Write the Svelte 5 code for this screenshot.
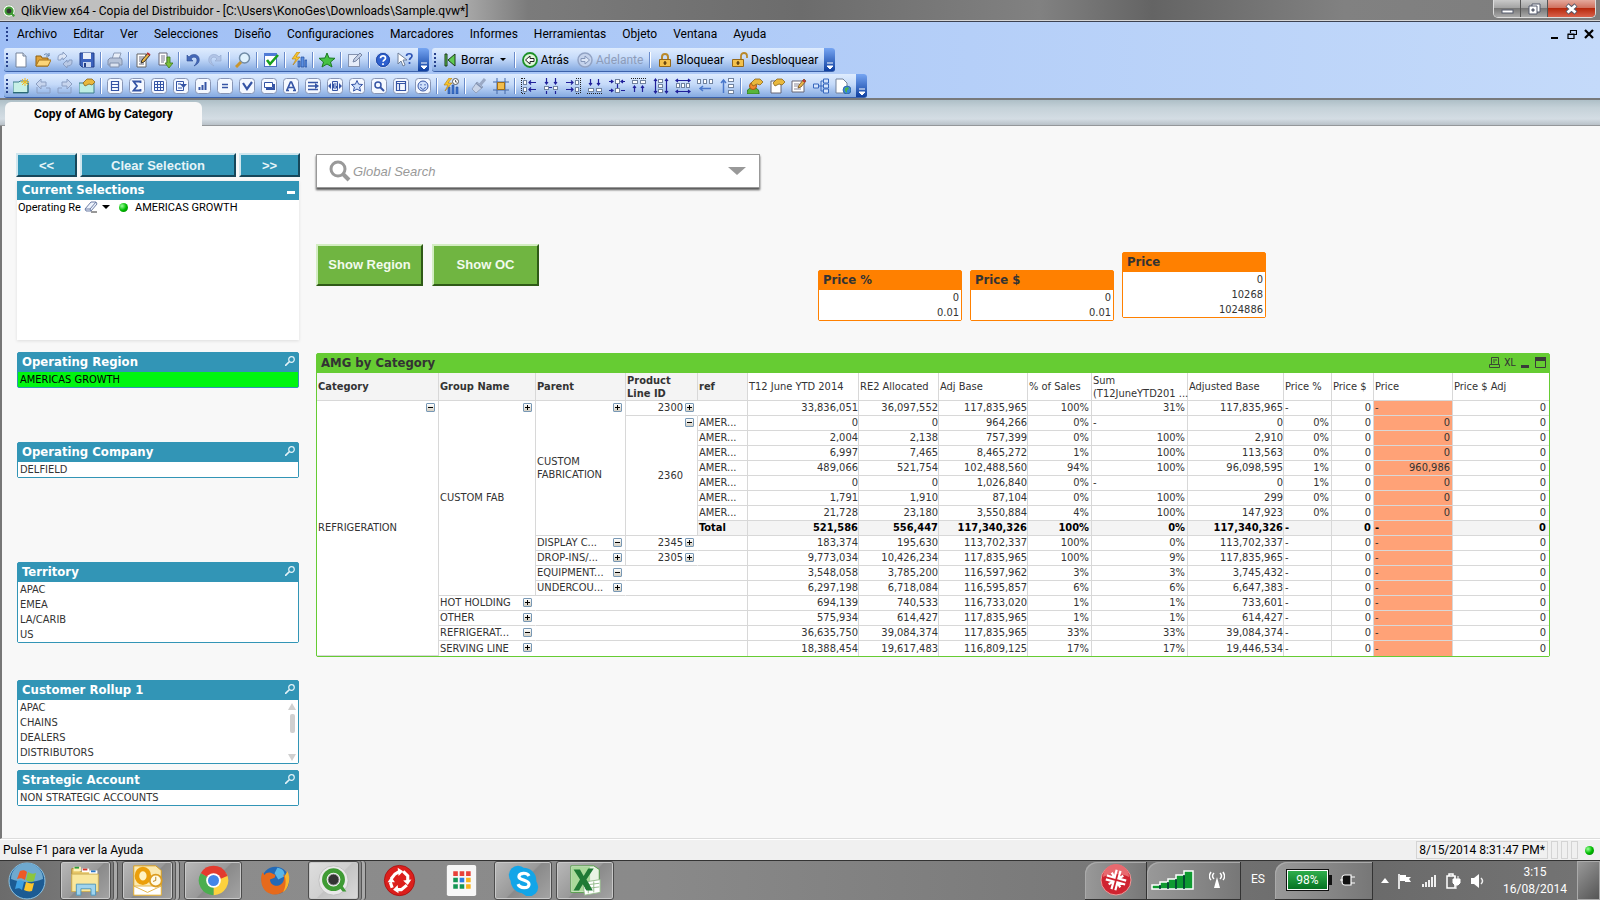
<script>
    // Menu
    const menus = ["Archivo", "Editar", "Ver", "Selecciones", "Diseño", "Configuraciones", "Marcadores", "Informes", "Herramientas", "Objeto", "Ventana", "Ayuda"];

    // Toolbars, "|" is a separator
    const standard = ["new", "open", "reload", "save", "|", "print", "|", "edit", "script", "|", "undo", "redo", "|", "find", "|", "check", "|", "wizard", "|", "star", "|", "note", "|", "help", "what"];
    const design = ["sheet", "prev", "next", "props", "|", "list", "stats", "grid", "multi", "chart", "input", "current", "button", "text", "line", "slider", "bookmark", "search", "container", "custom", "|", "chartwiz", "|", "brush", "crop", "|", "aleft", "acenter", "aright", "abottom", "amiddle", "atop", "vspace", "hspace", "hadjust", "vadjust", "|", "user", "docprops", "expr", "tables", "web"];

    // Icon parts
    const frame = '<rect x=".5" y=".5" width="15" height="15" rx="3" fill="#f4f8ff" stroke="#8795b5"/>';
    const page = '<path d="M3 1h7l3 3v11H3z" fill="#fff" stroke="#75839b"/><path d="M10 1v3h3" fill="#dbe3ef" stroke="#75839b"/>';
    const pen = '<path d="M7 10l1-3 5-6 2 2-5 6z" fill="#e8b548" stroke="#6d4a1e" stroke-width=".8"/><path d="M12 2l2 2" stroke="#b33" stroke-width="2"/>';
    const hand = '<path d="M4 5l4-4h5l3 3-3 3-3-1-4 2z" fill="#e9b83c" stroke="#8a641a" stroke-width=".8"/>';
    const bolt = '<path d="M6 0L1 7h4L2 13l7-8H5l4-5z" fill="#f7c52d" stroke="#b17c12" stroke-width=".6"/>';
    const box = (x, y, w, h) => `<rect x="${x}.5" y="${y}.5" width="${w}" height="${h}" fill="#fff" stroke="#71839f"/>`;
    const navy = (d) => `<path d="${d}" fill="none" stroke="#20209a" stroke-width="1.2"/>`;
    const dots = (d) => `<path d="${d}" fill="none" stroke="#222" stroke-width="1" stroke-dasharray="1 1"/>`;

    const icons = {
        new: page,
        open: '<path d="M1 14V4h5l1 2h6v8z" fill="#e0a33a" stroke="#8f6112"/><path d="M1 14l3-6h12l-3 6z" fill="#fcd579" stroke="#a8741a"/><path d="M9 3c2-2 4-1 5 1m0-3v3h-3" fill="none" stroke="#5f7fa6"/>',
        reload: '<path d="M1 8V6c0-3 2-4 5-4V0l4 4-4 4V6C5 6 4 6 4 8z" fill="#dbe5f6" stroke="#8499bd" stroke-width=".9"/><path d="M15 8v2c0 3-2 4-5 4v2l-4-4 4-4v2c1 0 2 0 2-2z" fill="#b9c9e5" stroke="#8499bd" stroke-width=".9"/>',
        save: '<path d="M1 1h14v14H3l-2-2z" fill="#3c62bd" stroke="#233f88"/><path d="M4 1h8v6H4z" fill="#e9effa"/><path d="M4 10h8v5H4z" fill="#c7d4ee"/><path d="M5 11h2v4H5z" fill="#233f88"/>',
        print: '<path d="M5 7l2-6h7l-2 6z" fill="#e8eef8" stroke="#8d9cb7"/><path d="M1 8l2-2h11l1 2v5H1z" fill="#b6c3d9" stroke="#8190ac"/><path d="M3 11h9v4H3z" fill="#dbe3f0" stroke="#8190ac"/>',
        edit: '<path d="M2 2h9v13H2z" fill="#fff" stroke="#666"/><path d="M4 5h5M4 7h4M4 9h3M4 12h5" stroke="#667"/><path d="M6 11l1-3 6-7 2 2-6 7z" fill="#e8b548" stroke="#222" stroke-width=".9"/><path d="M12 1l3 2" stroke="#b33" stroke-width="2"/>',
        script: '<path d="M2 1h8v12H2z" fill="#fff" stroke="#667"/><path d="M4 4h4M4 6h4M4 8h4M4 10h3" stroke="#778"/><path d="M10 5h3v6h3l-4 5-4-5h2z" fill="#7cbf3b" stroke="#3b7a17" stroke-width=".8"/>',
        undo: '<path d="M2 3v6h6L6 7c2-3 6-2 6 1 0 2-1 4-3 6 4-2 6-4 5-8-1-4-7-5-10-1z" fill="#4468b8" stroke="#2c4c92" stroke-width=".6"/>',
        redo: '<path d="M14 3v6H8l2-2C8 4 4 5 4 8c0 2 1 4 3 6C3 12 1 10 2 6c1-4 7-5 10-1z" fill="#b1c4e6" stroke="#92a8ce" stroke-width=".6"/>',
        find: '<circle cx="9.500" cy="6" r="5" fill="#dff1fd" stroke="#6f8aa5" stroke-width="1.500"/><path d="M6 10l-5 5" stroke="#c9952f" stroke-width="3"/>',
        check: '<rect x="1.500" y="1.500" width="12" height="13" fill="#fff" stroke="#4a6fc1"/><path d="M1 1h13v3H1z" fill="#4f7bd6"/><path d="M4 8l3 4 8-9" fill="none" stroke="#18a01d" stroke-width="2.600"/>',
        wizard: '<path d="M7 9h2v6H7zM10 5h3v10h-3zM14 8h2v7h-2z" fill="#5b8fe0" stroke="#244f9d" stroke-width=".7"/>' + bolt,
        star: '<path d="M8 1l2 5 6 .3-4.500 3.700L13 15l-5-3-5 3 1.500-5L0 6.300 6 6z" fill="#46c244" stroke="#1d7a23"/>',
        note: '<rect x="1.500" y="2.500" width="11" height="12" fill="#e6edf9" stroke="#8492ae"/><path d="M6 10l1-3 6-6 2 2-6 6z" fill="#c3cee3" stroke="#7787a6"/>',
        help: '<circle cx="8" cy="8" r="7.500" fill="#2e60cf" stroke="#c9d7f2"/><circle cx="8" cy="8" r="6.500" fill="none" stroke="#204aa5"/><path d="M5.500 6.200c.2-3 5-3 5 0 0 1.800-2.400 1.800-2.400 3.600M8 11.300v1.800" fill="none" stroke="#fff" stroke-width="1.700"/>',
        what: '<path d="M1 1v11l3-3 2 5 2-1-2-5h4z" fill="#fff" stroke="#6e7f99"/><path d="M9.500 4c0-3 5.500-3 5.500 0 0 2-2.500 2-2.500 4M12.500 10v2" fill="none" stroke="#2f55b5" stroke-width="1.700"/>',
        sheet: '<path d="M0 4h6l1-1h8v12H0z" fill="#c7f0e6" stroke="#3d7d8b"/><path d="M0 14.500h15V5" fill="none" stroke="#2b6877"/><path d="M12 0v8M8 4h8M9 1l6 6M15 1L9 7" stroke="#f0bb22"/>',
        prev: '<path d="M2 9v6h13v-5h-4" fill="none" stroke="#8b9ec2"/><path d="M1 6l5-5v3h5v4H6v3z" fill="#c7d5ee" stroke="#8b9ec2"/>',
        next: '<path d="M14 9v6H1v-5h4" fill="none" stroke="#8b9ec2"/><path d="M15 6l-5-5v3H5v4h5v3z" fill="#c7d5ee" stroke="#8b9ec2"/>',
        props: '<path d="M0 5h15v10H0z" fill="#bdeee2" stroke="#3d7d8b"/>' + hand,
        list: frame + '<path d="M4.500 3.500h7v9h-7zM5 6.500h6M5 9.500h6" fill="none" stroke="#3554a5" stroke-width="1.200"/>',
        stats: frame + '<path d="M11.500 5V3.500h-7L8 8l-3.500 4.500h7V11" fill="none" stroke="#3554a5" stroke-width="1.800"/>',
        grid: frame + '<path d="M3.500 3.500h9v9h-9zM6.500 3v9M9.500 3v9M3 6.500h9M3 9.500h9" fill="none" stroke="#3554a5"/>',
        multi: frame + '<path d="M3.500 3.500h7v9h-7zM5 6h3M5 10h4" fill="none" stroke="#3554a5"/><path d="M7 6h7l-3.500 4z" fill="#3554a5"/>',
        chart: frame + '<path d="M4.500 12v-3M7.500 12V7M10.500 12V4" stroke="#3554a5" stroke-width="2"/>',
        input: frame + '<path d="M5 6.500h6M5 9.500h6" stroke="#3554a5" stroke-width="1.600"/>',
        current: frame + '<path d="M4 5l4 6 5-7" fill="none" stroke="#3554a5" stroke-width="2.200"/>',
        button: frame + '<path d="M3.500 4.500h8v5h-8z" fill="#fff" stroke="#3554a5"/><path d="M5 11h8V6" fill="none" stroke="#3554a5" stroke-width="2"/>',
        text: frame + '<path d="M4 12L7.500 4h1L12 12M5.500 9.500h5M3 12.500h3M10 12.500h3" fill="none" stroke="#3554a5" stroke-width="1.700"/>',
        line: frame + '<path d="M3 4.500h10M3 8h8M3 11.500h10" stroke="#3554a5" stroke-width="1.400"/><path d="M10 5l4 3-4 3z" fill="#3554a5"/>',
        slider: frame + '<path d="M5.500 3.500h5v9h-5z" fill="#dfe8fb" stroke="#3554a5"/><path d="M4 5v6L1 8zM12 5v6l3-3z" fill="#3554a5"/><path d="M9.500 6h-3v4h3V8h-3" fill="none" stroke="#3554a5"/>',
        bookmark: frame + '<path d="M8 2.500l1.600 3.700 4 .3-3 2.600.9 4L8 11l-3.500 2.100.9-4-3-2.600 4-.3z" fill="#cfe0fb" stroke="#3554a5"/>',
        search: frame + '<circle cx="7" cy="7" r="3" fill="none" stroke="#3554a5" stroke-width="1.500"/><path d="M9 9l4 4" stroke="#3554a5" stroke-width="2"/>',
        container: frame + '<path d="M3.500 3.500h9v9h-9zM3 5.500h9M6.500 5v8" fill="none" stroke="#3554a5" stroke-width="1.200"/>',
        custom: frame + '<circle cx="8" cy="8" r="5" fill="#cfe0fb" stroke="#3554a5"/><path d="M5.500 9c1 3 4 3 5 0M6 6v1.500M10 6v1.500" fill="none" stroke="#3554a5"/>',
        chartwiz: '<path d="M5 9h2v7H5zM9 7h2v9H9zM13 9h2v7h-2z" fill="#3c74cf" stroke="#244f9d" stroke-width=".6"/>' + bolt + '<circle cx="12.500" cy="3.500" r="3" fill="#fff" stroke="#555"/><path d="M12.500 2v2H14" fill="none" stroke="#444" stroke-width=".8"/>',
        brush: '<path d="M14 1l-5 6" stroke="#9aa9c5" stroke-width="3"/><path d="M6 4l6 5-7 6-4-4z" fill="#c9d4e8" stroke="#93a2be"/><path d="M5 5l6 5" stroke="#8192b2" stroke-width="1.500"/>',
        crop: '<path d="M4 0v16M12 0v16M0 4h16M0 12h16" stroke="#4468a8"/><path d="M4.500 4.500h7v7h-7z" fill="#f2bd4d" stroke="#a06d18"/>',
        aleft: dots("M.5 0v16M1 .5h4M1 15.500h4") + box(2, 2, 3, 4) + box(2, 9, 3, 4) + navy("M15 4.500H8M10 2.500l-2 2 2 2M15 11.500H8M10 9.500l-2 2 2 2"),
        acenter: box(1, 8, 4, 3) + box(10, 8, 4, 3) + navy("M3.500 0v6M2 4l1.500 2L5 4M3.500 16v-3M12.500 0v6M11 4l1.500 2L14 4M12.500 16v-3M6 9.500h3"),
        aright: dots("M15.500 0v16M11 .5h4M11 15.500h4") + box(10, 2, 3, 4) + box(10, 9, 3, 4) + navy("M1 4.500h7M6 2.500l2 2-2 2M1 11.500h7M6 9.500l2 2-2 2"),
        abottom: dots("M0 15.500h16") + box(1, 10, 5, 3) + box(9, 10, 5, 3) + navy("M3.500 1v6M2 5l1.500 2L5 5M11.500 1v6M10 5l1.500 2L13 5"),
        amiddle: box(6, 1, 4, 4) + box(6, 10, 4, 4) + navy("M0 3.500h4M2 2l2 1.500L2 5M16 3.500h-4M14 2l-2 1.500L14 5M0 12.500h4M2 11l2 1.500L2 14M16 12.500h-4M8.500 6v4"),
        atop: dots("M0 .5h16") + box(1, 2, 5, 3) + box(9, 2, 5, 3) + navy("M3.500 14V8M2 10l1.500-2L5 10M11.500 14V8M10 10l1.500-2 1.500 2"),
        vspace: box(5, 1, 4, 3) + box(5, 6, 4, 3) + box(5, 11, 4, 3) + navy("M2.500 1v14M1 3l1.500-2L4 3M1 13l1.500 2L4 13M13.500 1v14M12 3l1.500-2L15 3M12 13l1.500 2 1.500-2"),
        hspace: box(1, 5, 3, 4) + box(6, 5, 3, 4) + box(11, 5, 3, 4) + navy("M1 2.500h14M3 1L1 2.500 3 4M13 1l2 1.500L13 4M1 13.500h14M3 12l-2 1.500L3 15M13 12l2 1.500-2 1.500"),
        hadjust: box(0, 1, 3, 4) + box(6, 1, 3, 4) + box(12, 1, 3, 4) + '<path d="M14 10.500H3M6 8l-3 2.500L6 13" fill="none" stroke="#4a78cc" stroke-width="1.500"/>',
        vadjust: box(9, 0, 5, 3) + box(9, 6, 5, 3) + box(9, 12, 5, 3) + '<path d="M4.500 15V2M2 5l2.500-3L7 5" fill="none" stroke="#4a78cc" stroke-width="1.500"/>',
        user: '<path d="M0 16c0-5 2-6 6-6s6 1 6 6z" fill="#58b53c" stroke="#2f7d1c"/><circle cx="6" cy="8" r="3.500" fill="#f08a2c" stroke="#a85212"/>' + hand,
        docprops: '<path d="M2 3h10v12H2z" fill="#fff" stroke="#667"/>' + hand,
        expr: '<path d="M1 3h12v11H1z" fill="#fff" stroke="#667"/><path d="M3 6h5M3 8h4M3 11h7" stroke="#889"/>' + pen,
        tables: '<path d="M5 8h3M8 3v10M8 3h3M8 13h3M8 8h3" stroke="#3667bd" fill="none"/><path d="M.5 6h5v4h-5zM10.500 1h5v4h-5zM10.500 6h5v4h-5zM10.500 11h5v4h-5z" fill="#d5e4fb" stroke="#3667bd"/>',
        web: '<path d="M1 1h7l4 4v10H1z" fill="#fff" stroke="#75839b"/><circle cx="12" cy="12" r="4" fill="#3a86d8" stroke="#225a9c" stroke-width=".7"/><path d="M10 10l3-1 1 2-2 1v3l-2-2z" fill="#4db34d"/>',
        erase: '<path d="M3 2h2v12H3zM13 2v12L6 8z" fill="#5fca50" stroke="#1c3b1a"/>',
        back: '<circle cx="8" cy="8" r="7" fill="#dff7da" stroke="#1d9128" stroke-width="1.800"/><path d="M3.500 8L8 4v2.500h4v3H8V12z" fill="#fff" stroke="#222"/>',
        forward: '<circle cx="8" cy="8" r="7" fill="#c5d3ec" stroke="#92a3c4" stroke-width="1.500"/><path d="M12.500 8L8 4v2.500H4v3h4V12z" fill="#dbe5f6" stroke="#8496b8"/>',
        lock: '<path d="M5 8V5c0-4 6-4 6 0v3" fill="none" stroke="#b9892b" stroke-width="2"/><path d="M2.500 7.500h11v7h-11z" fill="#f4c14c" stroke="#95681a"/><path d="M8 9v4M6.500 11h3" stroke="#5d3d0d" stroke-width="1.400"/>',
        unlock: '<path d="M9 8V4c0-4 6-4 6 0v2" fill="none" stroke="#b9892b" stroke-width="1.800"/><path d="M.5 7.500h11v7H.5z" fill="#f4c14c" stroke="#95681a"/><path d="M6 9v4M4.500 11h3" stroke="#5d3d0d" stroke-width="1.400"/>',
    };

    // List boxes
    const lists = [
        { title: "Operating Region", cls: "region", items: ["AMERICAS GROWTH"] },
        { title: "Operating Company", cls: "company", items: ["DELFIELD"] },
        { title: "Territory", cls: "territory", items: ["APAC", "EMEA", "LA/CARIB", "US"] },
        { title: "Customer Rollup 1", cls: "rollup", items: ["APAC", "CHAINS", "DEALERS", "DISTRIBUTORS"] },
        { title: "Strategic Account", cls: "account", items: ["NON STRATEGIC ACCOUNTS"] },
    ];

    const prices = [
        { title: "Price %", items: ["0", "0.01"] },
        { title: "Price $", items: ["0", "0.01"] },
        { title: "Price", items: ["0", "10268", "1024886"] },
    ];

    // Pivot table
    const widths = [122, 97, 90, 72, 50, 111, 80, 89, 64, 96, 96, 48, 42, 79, 96];
    const dims = ["Category", "Group Name", "Parent", "Product Line ID", "ref"];
    const measures = ["T12 June YTD 2014", "RE2 Allocated", "Adj Base", "% of Sales", "Sum (T12JuneYTD201\u00a0...", "Adjusted Base", "Price %", "Price $", "Price", "Price $ Adj"];
    const amer = { text: "AMER..." };

    const rows = [
        {
            lead: [
                { text: "REFRIGERATION", rows: 17, sign: "-" },
                { text: "CUSTOM FAB", rows: 13, sign: "+" },
                { text: "CUSTOM FABRICATION", rows: 9, sign: "+", wrap: true },
                { text: "2300", num: true, sign: "+", open: true },
                { text: "" },
            ],
            values: ["33,836,051", "36,097,552", "117,835,965", "100%", "31%", "117,835,965", "-", "0", "-", "0"],
        },
        { lead: [{ text: "2360", rows: 8, num: true, sign: "-" }, amer], values: ["0", "0", "964,266", "0%", "-", "0", "0%", "0", "0", "0"] },
        { lead: [amer], values: ["2,004", "2,138", "757,399", "0%", "100%", "2,910", "0%", "0", "0", "0"] },
        { lead: [amer], values: ["6,997", "7,465", "8,465,272", "1%", "100%", "113,563", "0%", "0", "0", "0"] },
        { lead: [amer], values: ["489,066", "521,754", "102,488,560", "94%", "100%", "96,098,595", "1%", "0", "960,986", "0"] },
        { lead: [amer], values: ["0", "0", "1,026,840", "0%", "-", "0", "1%", "0", "0", "0"] },
        { lead: [amer], values: ["1,791", "1,910", "87,104", "0%", "100%", "299", "0%", "0", "0", "0"] },
        { lead: [amer], values: ["21,728", "23,180", "3,550,884", "4%", "100%", "147,923", "0%", "0", "0", "0"] },
        { total: true, lead: [{ text: "Total" }], values: ["521,586", "556,447", "117,340,326", "100%", "0%", "117,340,326", "-", "0", "-", "0"] },
        { lead: [{ text: "DISPLAY C...", sign: "-" }, { text: "2345", num: true, sign: "+", open: true }, { text: "" }], values: ["183,374", "195,630", "113,702,337", "100%", "0%", "113,702,337", "-", "0", "-", "0"] },
        { lead: [{ text: "DROP-INS/...", sign: "+" }, { text: "2305", num: true, sign: "+", open: true }, { text: "" }], values: ["9,773,034", "10,426,234", "117,835,965", "100%", "9%", "117,835,965", "-", "0", "-", "0"] },
        { lead: [{ text: "EQUIPMENT...", sign: "-", open: true }, { text: "", cols: 2 }], values: ["3,548,058", "3,785,200", "116,597,962", "3%", "3%", "3,745,432", "-", "0", "-", "0"] },
        { lead: [{ text: "UNDERCOU...", sign: "+", open: true }, { text: "", cols: 2 }], values: ["6,297,198", "6,718,084", "116,595,857", "6%", "6%", "6,647,383", "-", "0", "-", "0"] },
        { lead: [{ text: "HOT HOLDING", sign: "+", open: true }, { text: "", cols: 3 }], values: ["694,139", "740,533", "116,733,020", "1%", "1%", "733,601", "-", "0", "-", "0"] },
        { lead: [{ text: "OTHER", sign: "+", open: true }, { text: "", cols: 3 }], values: ["575,934", "614,427", "117,835,965", "1%", "1%", "614,427", "-", "0", "-", "0"] },
        { lead: [{ text: "REFRIGERAT...", sign: "-", open: true }, { text: "", cols: 3 }], values: ["36,635,750", "39,084,374", "117,835,965", "33%", "33%", "39,084,374", "-", "0", "-", "0"] },
        { lead: [{ text: "SERVING LINE", sign: "+", open: true }, { text: "", cols: 3 }], values: ["18,388,454", "19,617,483", "116,809,125", "17%", "17%", "19,446,534", "-", "0", "-", "0"] },
    ];

    // Taskbar, 36px icons
    const arcs = '<path d="M18 18L4.100 10A16 16 0 0 1 31.900 10z" fill="#e33b2e"/><path d="M18 18l13.900-8A16 16 0 0 1 18 34z" fill="#fdd23e"/><path d="M18 18v16A16 16 0 0 1 4.100 10z" fill="#4bae4f"/><path d="M18 10h14a16 16 0 0 1 1 3l-9 4z" fill="#e33b2e"/>';
    const apps = [
        { name: "Explorer", open: true, stack: true, icon: '<path d="M3 5h7l2 3h18v22H3z" fill="#e6c565" stroke="#a58432"/><path d="M5 3h8v5H5z" fill="#fff3b8"/><path d="M6 3h5v2H6z" fill="#2e9a3d"/><path d="M14 5h8v4h-8z" fill="#fff"/><path d="M15 5h5v2h-5z" fill="#d2342b"/><path d="M22 7h9v4h-9z" fill="#fff"/><path d="M24 7h5v2h-5z" fill="#2a77c9"/><path d="M3 11h29v19H3z" fill="#f9e79d" stroke="#cdae58"/><path d="M8 34V22h21v12h-5v-7H13v7z" fill="#9fd4ee" stroke="#4b96bd"/>' },
        { name: "Outlook", open: true, stack: true, icon: '<path d="M3 2h24l6 5v27H3z" fill="#fbe9b0" stroke="#d99b16"/><path d="M3 24h30v10H3z" fill="#fff" stroke="#e0b040"/><path d="M3 24l15 7 15-7" fill="none" stroke="#e0b040"/><ellipse cx="13" cy="13" rx="6.500" ry="7.500" fill="#fff3c4" stroke="#eb9f0c" stroke-width="5"/><circle cx="27" cy="18" r="6.500" fill="#fffbe6" stroke="#dc9d20" stroke-width="2"/><path d="M27 14v4l-3 1" fill="none" stroke="#b57a10"/>' },
        { name: "Chrome", open: true, icon: arcs + '<circle cx="18" cy="18" r="8" fill="#fff"/><circle cx="18" cy="18" r="6" fill="#4285e8"/>' },
        { name: "Firefox", icon: '<circle cx="18" cy="18" r="15" fill="#2469b6"/><path d="M20 4c7 1 9 6 7 10l-6 3-4-7z" fill="#59b6e8"/><path d="M4 9l2 3c2-3 6-3 8-2l4 2-1 3-5 2c0 6 7 9 12 5 4-3 4-8 2-11 6 4 8 12 3 17-8 9-23 6-26-6-1-5-1-9 1-13z" fill="#e66a1c"/><path d="M31 8c4 8 2 18-5 23 3-5 4-12 2-18z" fill="#f8b52c"/>' },
        { name: "QlikView", open: true, stack: true, active: true, icon: '<circle cx="18" cy="18" r="16" fill="#e9e9e9" stroke="#bdbdbd"/><circle cx="18" cy="17" r="10" fill="#fff" stroke="#3f9b34" stroke-width="5"/><path d="M22 23l6 7h4l-6-9z" fill="#3f9b34"/><circle cx="18" cy="17" r="6" fill="#333" stroke="#999"/>' },
        { name: "Recovery", icon: '<circle cx="18" cy="18" r="16.500" fill="#dc1f1c" stroke="#a81414"/><path d="M9 16l4-5 5-3M22 8l5 5 0 6M26 23l-6 5h-5M10 26l-2-6" fill="none" stroke="#fff" stroke-width="3.400"/><path d="M16 4l6 4-5 5zM31 17l-4 6-5-5zM17 32l-6-4 5-5zM5 20l4-6 4 6z" fill="#fff"/>' },
        { name: "Apps", icon: '<rect x="2" y="1" width="32" height="34" rx="2" fill="#f7f7f7"/><path d="M9 8h5v5H9zM16 8h5v5h-5zM23 8h5v5h-5z" fill="#e8423a"/><path d="M9 15h5v5H9zM9 22h5v5H9zM16 22h5v5h-5z" fill="#149654"/><path d="M16 15h5v5h-5z" fill="#2b7de0"/><path d="M23 15h5v5h-5zM23 22h5v5h-5z" fill="#f8b31c"/>' },
        { name: "Skype", open: true, icon: '<circle cx="12" cy="12" r="10" fill="#12a5e8"/><circle cx="24" cy="25" r="10" fill="#12a5e8"/><circle cx="18" cy="18" r="14" fill="#12a5e8"/><path d="M24 13c-2-4-11-4-11 1 0 4 11 3 11 8 0 5-10 5-12 0" fill="none" stroke="#fff" stroke-width="3.500"/>' },
        { name: "Excel", open: true, icon: '<path d="M2 2h25l6 4v25H2z" fill="#e9f4e4" stroke="#4d9a41"/><path d="M3 3h20v27H3z" fill="#a9d99a"/><path d="M15 20l19-3v14l-17 3z" fill="#fff" stroke="#90b988"/><path d="M17 23l16-2M17 27l16-2M21 20v12M27 19v12" stroke="#90b988"/><path d="M5 6h7l4 7 5-8h6l-8 12 7 12h-7l-4-7-4 7H5l7-12z" fill="#1f7a35"/>' },
    ];
</script>

{#snippet tool(name)}
    {#if name === "|"}
        <i class="sep"></i>
    {:else}
        <button class="tool" aria-label={name}><svg viewBox="0 0 16 16">{@html icons[name]}</svg></button>
    {/if}
{/snippet}

{#snippet action(name, label)}
    <button class="action" class:off={name === "forward"}><svg viewBox="0 0 16 16">{@html icons[name]}</svg>{label}</button>
{/snippet}

{#snippet cap()}
    <button class="cap" aria-label="More"><svg viewBox="0 0 11 24"><path d="M3 15h6M3 18h6l-3 3z" fill="#fff" stroke="#fff" /></svg></button>
{/snippet}

<!-- HTML -->
<div class="window">
    <header class="title">
        <svg class="logo" viewBox="0 0 16 16"><circle cx="8" cy="8" r="7" fill="#fff" stroke="#a5b5a0" /><circle cx="8" cy="8" r="4" fill="#333" stroke="#3f9b34" stroke-width="2.500" /><path d="M10 10l4 4" stroke="#3f9b34" stroke-width="2.500" /></svg>
        <h1>QlikView x64 - Copia del Distribuidor - [C:\Users\KonoGes\Downloads\Sample.qvw*]</h1>
        <div class="controls">
            <button aria-label="Minimizar"><svg viewBox="0 0 13 12"><rect x="1" y="7" width="11" height="3" fill="#fff" stroke="#555a6c" /></svg></button>
            <button aria-label="Restaurar"><svg viewBox="0 0 13 12"><path d="M4 1h8v8H4z" fill="#fff" stroke="#555a6c" /><path d="M1 3h8v8H1z" fill="#fff" stroke="#555a6c" /><path d="M4 6h2v2H4z" fill="#888" stroke="#555a6c" /></svg></button>
            <button class="close" aria-label="Cerrar"><svg viewBox="0 0 13 12"><path d="M2 2l9 8M11 2l-9 8" stroke="#555a6c" stroke-width="4.500" /><path d="M2.500 2.500l8 7M10.500 2.500l-8 7" stroke="#fff" stroke-width="2.800" /></svg></button>
        </div>
    </header>

    <div class="bars">
        <nav>
            <i class="grip"></i>
            {#each menus as menu}
                <button>{menu}</button>
            {/each}
            <div class="mdi">
                <button aria-label="Minimizar documento"><svg viewBox="0 0 10 10"><path d="M1 8h7v2H1z" /></svg></button>
                <button aria-label="Restaurar documento"><svg viewBox="0 0 10 10"><path d="M3.500 4V1.500h6v4H7M1 5.500h6v4H1zM3 1.500h7M.5 5h7" fill="none" stroke="#000" stroke-width="1.200" /></svg></button>
                <button aria-label="Cerrar documento"><svg viewBox="0 0 10 10"><path d="M1 1l8 8M9 1L1 9" stroke="#000" stroke-width="2.200" /></svg></button>
            </div>
        </nav>
        <div class="strip">
            <div class="bar">
                <i class="grip"></i>
                {#each standard as name}{@render tool(name)}{/each}
                {@render cap()}
            </div>
            <div class="bar">
                <i class="grip"></i>
                {@render action("erase", "Borrar")}
                <i class="drop"></i>
                <i class="sep"></i>
                {@render action("back", "Atrás")}
                {@render action("forward", "Adelante")}
                <i class="sep"></i>
                {@render action("lock", "Bloquear")}
                {@render action("unlock", "Desbloquear")}
                {@render cap()}
            </div>
        </div>
        <div class="strip">
            <div class="bar">
                <i class="grip"></i>
                {#each design as name}{@render tool(name)}{/each}
                {@render cap()}
            </div>
        </div>
    </div>

    <div class="tabs"><button>Copy of AMG by Category</button></div>

    <main>
        <aside>
            <div class="steps">
                <button class="blue">&lt;&lt;</button>
                <button class="blue">Clear Selection</button>
                <button class="blue">&gt;&gt;</button>
            </div>
            <section class="current">
                <h2>Current Selections <button aria-label="Minimize"></button></h2>
                <p>
                    <span class="field">Operating Re</span>
                    <svg class="eraser" viewBox="0 0 14 12"><path d="M1 8l6-7h5l1 2-6 7H2z" fill="#eef3fc" stroke="#6f7fa6" /><path d="M1 8h5l6-7M6 8l1 2" fill="none" stroke="#6f7fa6" /><path d="M7 11h6" stroke="#333" /></svg>
                    <i class="drop"></i>
                    <i class="led"></i>
                    <span>AMERICAS GROWTH</span>
                </p>
            </section>
            {#each lists as list}
                <section class="list {list.cls}">
                    <h2>
                        {list.title}
                        <button aria-label="Search"><svg viewBox="0 0 10 10"><circle cx="6.500" cy="3.500" r="2.800" fill="none" stroke="#e4f3f8" stroke-width="1.200" /><path d="M4.500 5.500L0 10" stroke="#e4f3f8" stroke-width="1.600" /></svg></button>
                    </h2>
                    <div class="body">
                        <ul>
                            {#each list.items as item}
                                <li>{item}</li>
                            {/each}
                        </ul>
                        {#if list.cls === "rollup"}
                            <div class="scroll"><i class="up"></i><i class="thumb"></i><i class="down"></i></div>
                        {/if}
                    </div>
                </section>
            {/each}
        </aside>

        <div class="content">
            <label class="global">
                <svg viewBox="0 0 22 22"><circle cx="9" cy="9" r="7" fill="none" stroke="#999" stroke-width="3" /><path d="M14 14l6 6" stroke="#999" stroke-width="4" /></svg>
                <input type="text" placeholder="Global Search" aria-label="Global Search" />
                <i></i>
            </label>

            <div class="middle">
                <button class="green">Show Region</button>
                <button class="green">Show OC</button>
                <div class="prices">
                    {#each prices as price}
                        <section class="price">
                            <h2>{price.title}</h2>
                            <ul>
                                {#each price.items as item}
                                    <li>{item}</li>
                                {/each}
                            </ul>
                        </section>
                    {/each}
                </div>
            </div>

            <section class="pivot">
                <h2>
                    AMG by Category
                    <span class="tools">
                        <button aria-label="Print"><svg viewBox="0 0 11 11"><path d="M2.500 7V.5h7V7M.5 7.500h10v3H.5zM4 3h4M4 5h2" fill="none" stroke="#3a4a34" /></svg></button>
                        <button class="xl">XL</button>
                        <button aria-label="Minimize"><svg viewBox="0 0 11 11"><path d="M1 8h8v3H1z" fill="#3a3a3a" /></svg></button>
                        <button aria-label="Maximize"><svg viewBox="0 0 11 11"><path d="M.5 1.500h10v9H.5z" fill="none" stroke="#3a3a3a" /><path d="M0 0h11v4H0z" fill="#3a3a3a" /></svg></button>
                    </span>
                </h2>
                <table>
                    <colgroup>
                        {#each widths as width}
                            <col style="width: {width}px" />
                        {/each}
                    </colgroup>
                    <thead>
                        <tr>
                            {#each dims as dim}
                                <th class="dim">{dim}</th>
                            {/each}
                            {#each measures as measure}
                                <th>{measure}</th>
                            {/each}
                        </tr>
                    </thead>
                    <tbody>
                        {#each rows as row}
                            <tr class:total={row.total}>
                                {#each row.lead as cell}
                                    <td rowspan={cell.rows} colspan={cell.cols} class:open={cell.open} class:id={cell.num} class:wrap={cell.wrap}>
                                        {cell.text}
                                        {#if cell.sign}
                                            <button class="sign" class:plus={cell.sign === "+"} aria-label={cell.sign === "+" ? "Expand" : "Collapse"}></button>
                                        {/if}
                                    </td>
                                {/each}
                                {#each row.values as value, i}
                                    <td class:num={value !== "-"} class:pct={i === 3 || i === 4 || i > 5} class:hot={i === 8}>{value}</td>
                                {/each}
                            </tr>
                        {/each}
                    </tbody>
                </table>
            </section>
        </div>
    </main>

    <footer class="status">
        <span>Pulse F1 para ver la Ayuda</span>
        <time>8/15/2014 8:31:47 PM*</time>
        <i></i><i></i><i></i>
        <b class="led"></b>
    </footer>

    <div class="taskbar">
        <button class="start" aria-label="Inicio">
            <svg viewBox="0 0 38 38"><circle cx="19" cy="19" r="18" fill="#1c5b93" stroke="#8cc4e4" /><path d="M3 17a16 16 0 0 1 32 0c-9 4-23 4-32 0z" fill="#6fa9cf" /><path d="M12 9c3-1 5-1 7 1l-2 8c-3-2-5-2-8-1z" fill="#ee5a26" /><path d="M20 10c3 2 5 2 8 1l-2 8c-3 1-5 1-8-1z" fill="#8cc63e" /><path d="M9 19c3-1 5-1 7 1l-2 8c-2-2-4-2-7-1z" fill="#3da0e3" /><path d="M18 20c3 1 5 2 8 1l-2 8c-3 1-6 0-8-1z" fill="#fdc52c" /></svg>
        </button>
        {#each apps as app}
            <button class="app" class:open={app.open} class:stack={app.stack} class:active={app.active} aria-label={app.name}>
                <span><svg viewBox="0 0 36 36">{@html app.icon}</svg></span>
            </button>
        {/each}

        <div class="tray">
            <div class="flap nexus">
                <svg viewBox="0 0 32 32" width="32" height="32"><circle cx="16" cy="16" r="15" fill="#cf2330" stroke="#e99" /><path d="M3 13a13 13 0 0 1 26 0c-7-4-19-4-26 0z" fill="#e8696f" /><path transform="rotate(15 16 16)" d="M14 6v8H6M18 6v8h8M14 26v-8H6M18 26v-8h8M14 14l-4-4M18 14l4-4M14 18l-4 4M18 18l4 4" fill="none" stroke="#fff" stroke-width="2.200" /></svg>
            </div>
            <div class="flap signal">
                <svg viewBox="0 0 44 20" width="44" height="20"><path d="M1 19v-4h8v-3h8V9h8V5h8V1h9v18z" fill="#0e9a30" stroke="#fff" stroke-width="1.500" /><path d="M9 15v4M17 12v7M25 9v10M33 5v14" stroke="#033" stroke-width="1.500" /></svg>
                <svg viewBox="0 0 16 18" width="16" height="18"><path d="M8 6l3 11H5z" fill="#fff" /><path d="M5 2c-2 2-2 4 0 6M2 1C0 4 0 7 2 9M11 2c2 2 2 4 0 6M14 1c2 3 2 6 0 8" fill="none" stroke="#fff" stroke-width="1.500" /></svg>
            </div>
            <span class="lang">ES</span>
            <div class="flap power">
                <span class="battery">98%</span>
                <svg viewBox="0 0 16 12" width="16" height="12"><path d="M5 1h6v10H5C2 11 2 9 2 6s0-5 3-5zM11 3h4M11 9h4M0 6h3" fill="#111" stroke="#fff" stroke-width="1.200" /></svg>
            </div>
            <div class="small">
                <svg viewBox="0 0 8 5" width="8" height="5"><path d="M0 5l4-5 4 5z" fill="#fff" /></svg>
                <svg viewBox="0 0 16 16" width="16" height="16"><path d="M2 1v15" stroke="#fff" stroke-width="1.600" /><path d="M3 2h6v2h5l-2 2 2 3H8V8H3z" fill="#fff" /></svg>
                <svg viewBox="0 0 16 16" width="16" height="16"><path d="M1 11h2v3H1zM4 9h2v5H4zM7 7h2v7H7zM10 4h2v10h-2zM13 2h2v12h-2z" fill="#eee" /></svg>
                <svg viewBox="0 0 16 16" width="16" height="16"><path d="M2 3h8v12H2zM4 1h4v2H4z" fill="none" stroke="#fff" stroke-width="1.500" /><path d="M8 6h7v4l-2 2h-3l-2-2zM10 3v3M13 3v3M11 12v4" fill="#fff" stroke="#fff" /></svg>
                <svg viewBox="0 0 16 16" width="16" height="16"><path d="M2 5h3l5-4v14l-5-4H2z" fill="#fff" /><path d="M12 5c2 2 2 4 0 6" fill="none" stroke="#eee" stroke-width="1.500" /></svg>
            </div>
            <div class="clock"><span>3:15</span><span>16/08/2014</span></div>
            <button class="desktop" aria-label="Mostrar escritorio"></button>
        </div>
    </div>
</div>

<!-- CSS -->
<style>
    :global(body) {
        margin: 0;
    }
    .window {
        --ui: Roboto, "Noto Sans", sans-serif;
        --data: "DejaVu Sans Condensed", "DejaVu Sans", sans-serif;
        --button: "Liberation Sans", Arial, sans-serif;
        --blue: #3295b6;
        --line: #d8d8d8;
        display: flex;
        flex-direction: column;
        min-height: 100vh;
        background: #f8f8f8;
        color: #000;
        font-family: var(--ui);
        font-size: 12px;
    }
    .window *,
    .window *::before {
        box-sizing: border-box;
    }
    button {
        padding: 0;
        border: 0;
        background: none;
        color: inherit;
        font: inherit;
    }
    svg {
        display: block;
        flex: none;
    }
    h1,
    h2,
    p,
    ul {
        margin: 0;
        padding: 0;
        font-weight: normal;
        list-style: none;
    }

    /* Title */
    .title {
        display: flex;
        align-items: center;
        height: 22px;
        padding: 0 4px 0 2px;
        background: linear-gradient(90deg, #bdbdbd, #c6c6c6 26%, #a9a9a9 29%, #7b7b7b 33%, #6c6c6c 50%, #818181 65%, #646464 72%, #818181 84%, #7d7d7d);
        border-bottom: 1px solid #3d4250;
        box-shadow: inset 0 -1px #d5d5d5;
    }
    .logo {
        width: 14px;
        height: 14px;
        margin-right: 5px;
    }
    h1 {
        flex: 1;
        font-size: 12px;
        white-space: nowrap;
    }
    .controls {
        display: flex;
        align-self: flex-start;
        height: 18px;
        border: 1px solid #ddd;
        border-top: 0;
        border-radius: 0 0 5px 5px;
        overflow: hidden;
    }
    .controls button {
        display: grid;
        place-items: center;
        width: 27px;
        border-right: 1px solid #555;
        background: linear-gradient(#c9c9c9, #a4a4a4 45%, #777 50%, #aaa);
    }
    .controls .close {
        width: 47px;
        border: 0;
        background: linear-gradient(#e4a99c, #d0725f 45%, #b7290d 50%, #d9614a);
    }
    .controls svg {
        width: 13px;
        height: 12px;
    }

    /* Bars */
    .bars {
        display: flex;
        flex-direction: column;
        gap: 2px;
        background: linear-gradient(90deg, #9ebef5, #c4dafa);
        border-bottom: 2px solid #77797b;
    }
    nav {
        display: flex;
        align-items: center;
        height: 24px;
        padding: 0 6px;
        gap: 16px;
    }
    nav .grip {
        margin-right: -9px;
    }
    .mdi {
        display: flex;
        gap: 7px;
        margin-left: auto;
    }
    .mdi svg {
        width: 10px;
        height: 10px;
    }
    .grip {
        width: 4px;
        height: 14px;
        background: repeating-linear-gradient(#27418c 0 2px, transparent 2px 4px) 0 0 / 2px 100% no-repeat;
    }
    .strip {
        display: flex;
        gap: 3px;
        padding-left: 4px;
    }
    .bar {
        display: flex;
        align-items: center;
        height: 24px;
        padding-left: 2px;
        border-radius: 3px;
        border-bottom: 1px solid #3b61a9;
        background: linear-gradient(#dfecfe, #c5daf9 45%, #85aae1);
        overflow: hidden;
    }
    .tool {
        width: 22px;
        padding: 0 3px;
    }
    .tool svg,
    .action svg {
        width: 16px;
        height: 16px;
    }
    .sep {
        width: 2px;
        height: 16px;
        margin: 0 2px;
        border-left: 1px solid #6a8ccb;
        border-right: 1px solid #fff;
    }
    .action {
        display: flex;
        align-items: center;
        gap: 3px;
        padding: 0 4px;
        white-space: nowrap;
    }
    .off {
        color: #8d9cb9;
    }
    .drop {
        margin: 0 6px 0 2px;
        border: 3px solid transparent;
        border-top-color: #000;
        border-bottom: 0;
    }
    .cap {
        width: 11px;
        height: 24px;
        margin-left: 2px;
        background: linear-gradient(#76a5f2, #3667c0 60%, #0a3a9c);
    }

    /* Tabs */
    .tabs {
        height: 26px;
        padding: 2px 5px 0;
        background: linear-gradient(#aebfc7, #c4d1d8 30%, #d4dde4 75%, #b9c1c8);
        border-bottom: 1px solid #94979a;
    }
    .tabs button {
        width: 197px;
        height: 24px;
        border-radius: 6px 6px 0 0;
        background: #f8f8f8;
        font-weight: bold;
    }

    /* Sheet */
    main {
        display: flex;
        flex: 1;
        gap: 16px;
        padding: 27px 50px 32px 14px;
        border-left: 2px solid #777;
        border-bottom: 1px solid #dcdcdc;
    }
    aside {
        width: 284px;
        flex: none;
    }
    .steps {
        display: grid;
        grid-template-columns: 61px 1fr 61px;
        gap: 3px;
    }
    .blue,
    .green {
        height: 24px;
        border: 2px solid;
        border-color: #cfe6ee #17475a #17475a #cfe6ee;
        background: var(--blue);
        color: #e6f4f8;
        font: bold 13px var(--button);
    }
    h2 {
        display: flex;
        align-items: center;
        justify-content: space-between;
        height: 20px;
        padding: 0 4px 2px 5px;
        font: bold 13px var(--data);
    }
    .current {
        height: 159px;
        margin: 4px 1px 0;
        background: #fff;
        box-shadow: 0 1px 3px #ddd;
    }
    .current h2 {
        height: 19px;
        background: var(--blue);
        color: #fff;
    }
    .current h2 button {
        width: 8px;
        height: 3px;
        margin-top: 6px;
        background: #fff;
    }
    .current p {
        display: flex;
        align-items: center;
        height: 14px;
        padding-left: 1px;
        font-size: 11px;
    }
    .current .field {
        width: 66px;
    }
    .current .eraser {
        width: 14px;
        height: 12px;
    }
    .current .drop {
        margin: 0 9px 0 4px;
        border-width: 4px;
        border-bottom: 0;
    }
    .led {
        width: 9px;
        height: 9px;
        border-radius: 50%;
        background: radial-gradient(circle at 3px 3px, #9f9, #0b0 50%, #070);
    }
    .current .led {
        margin-right: 7px;
    }
    .list {
        margin: 0 1px;
        border: 1px solid var(--blue);
        border-radius: 2px;
        background: var(--blue);
        color: #fff;
    }
    .list h2 {
        height: 19px;
        padding: 0 3px 2px 4px;
    }
    .list h2 svg {
        width: 10px;
        height: 10px;
        margin-bottom: 2px;
    }
    .body {
        display: flex;
        justify-content: space-between;
        background: #fff;
        color: #333;
    }
    li {
        height: 15px;
        padding: 0 2px;
        font: 11px/15px var(--data);
    }
    .region {
        margin-top: 12px;
    }
    .region .body {
        background: #00f510;
        color: #000;
    }
    .company {
        margin-top: 54px;
    }
    .territory {
        margin-top: 84px;
    }
    .rollup {
        margin-top: 37px;
    }
    .rollup .body {
        height: 63px;
    }
    .account {
        margin-top: 6px;
    }
    .scroll {
        display: flex;
        flex-direction: column;
        align-items: center;
        gap: 4px;
        width: 12px;
        padding: 3px 0 2px;
    }
    .up,
    .down {
        border: 4px solid transparent;
        border-bottom: 7px solid #d0d0d0;
        border-top: 0;
    }
    .down {
        margin-top: auto;
        border-top: 7px solid #d0d0d0;
        border-bottom: 0;
    }
    .thumb {
        width: 5px;
        height: 19px;
        border-radius: 2px;
        background: #d0d0d0;
    }

    /* Content */
    .content {
        flex: 1;
        min-width: 0;
    }
    .global {
        display: flex;
        align-items: center;
        width: 444px;
        height: 34px;
        margin-top: 1px;
        padding: 0 13px 0 12px;
        border: 1px solid #999;
        background: #fff;
        box-shadow: 0 2px 2px #555;
    }
    .global svg {
        width: 22px;
        height: 22px;
    }
    .global input {
        flex: 1;
        padding: 0 2px;
        border: 0;
        outline: 0;
        background: none;
        font: italic 13px var(--button);
    }
    .global input::placeholder {
        color: #999;
        opacity: 1;
    }
    .global i {
        border: 9px solid transparent;
        border-top: 8px solid #999;
        border-bottom: 0;
    }
    .middle {
        display: flex;
        align-items: flex-start;
        gap: 9px;
        margin-top: 56px;
    }
    .green {
        width: 107px;
        height: 42px;
        padding-bottom: 2px;
        border-color: #d3edc2 #2f5a17 #2f5a17 #d3edc2;
        background: #70b541;
        color: #f2faec;
    }
    .prices {
        display: flex;
        align-items: flex-start;
        gap: 8px;
        margin-left: 270px;
    }
    .price {
        width: 144px;
        margin-top: 26px;
        border: 1px solid #ff8000;
        border-radius: 2px;
        background: #ff8000;
        color: #333;
    }
    .price:last-child {
        margin-top: 8px;
    }
    .price h2,
    .pivot h2 {
        height: 19px;
        padding: 0 3px 2px 4px;
    }
    .price ul {
        background: #fff;
        text-align: right;
    }
    .pivot {
        margin-top: 32px;
        border: 1px solid #66cc33;
        border-radius: 2px;
        background: #66cc33;
        color: #333;
    }
    .tools {
        display: flex;
        align-items: center;
        gap: 4px;
    }
    .tools svg {
        width: 11px;
        height: 11px;
    }
    .xl {
        font: 10px/11px var(--ui);
    }

    /* Table */
    table {
        width: 100%;
        table-layout: fixed;
        border-collapse: separate;
        border-spacing: 0;
        background: #fff;
        font: 11px/14px var(--data);
    }
    th {
        height: 28px;
        padding: 0 0 0 1px;
        border-right: 1px solid var(--line);
        border-bottom: 1px solid var(--line);
        font-weight: normal;
        line-height: 13px;
        text-align: left;
    }
    .dim {
        background: #f4f4f4;
        font-weight: bold;
    }
    td {
        position: relative;
        height: 15px;
        padding: 0 1px;
        border-right: 1px solid var(--line);
        border-bottom: 1px solid var(--line);
        white-space: nowrap;
    }
    td:last-child,
    th:last-child {
        border-right: 0;
        padding-right: 3px;
    }
    tr:last-child td {
        border-bottom: 0;
    }
    .wrap {
        line-height: 13px;
        white-space: normal;
    }
    .open {
        border-right-color: transparent;
    }
    .id {
        padding-right: 14px;
        text-align: right;
    }
    .num {
        padding-right: 0;
        text-align: right;
    }
    .pct {
        padding-right: 2px;
    }
    .total td {
        background: #f4f4f4;
        color: #000;
        font-weight: bold;
    }
    td.hot,
    .total td.hot {
        background: #ffa277;
    }
    .sign {
        position: absolute;
        top: 2px;
        right: 3px;
        width: 9px;
        height: 9px;
        border: 1px solid #7898b5;
        border-radius: 1px;
        background:
            linear-gradient(#000, #000) center / 5px 1px no-repeat,
            linear-gradient(#fff, #d4cfc2);
    }
    .plus {
        background:
            linear-gradient(#000, #000) center / 5px 1px no-repeat,
            linear-gradient(#000, #000) center / 1px 5px no-repeat,
            linear-gradient(#fff, #d4cfc2);
    }

    /* Status */
    .status {
        display: flex;
        align-items: center;
        gap: 3px;
        height: 21px;
        padding: 0 6px 0 3px;
        border-top: 1px solid #fff;
        background: #f0f0f0;
    }
    .status time {
        margin-left: auto;
        padding: 0 2px;
        border: 1px solid #d4d4d4;
        line-height: 16px;
    }
    .status i {
        width: 7px;
        height: 18px;
        border: 1px solid #d4d4d4;
    }
    .status b {
        margin-left: 4px;
    }

    /* Taskbar */
    .taskbar {
        display: flex;
        height: 40px;
        border-top: 1px solid #333;
        background: linear-gradient(90deg, #6b6b6b, #8c8c8c 12%, #8a8a8a 40%, #7a7a7a 66%, #6a6a6a 85%, #747474);
        color: #fff;
    }
    .start {
        width: 56px;
        padding-left: 8px;
    }
    .start svg {
        width: 38px;
        height: 38px;
    }
    .app {
        width: 58px;
        margin-left: 4px;
    }
    .app span {
        display: grid;
        place-items: center;
        height: 39px;
        border: 1px solid transparent;
        border-radius: 3px;
    }
    .app svg {
        width: 33px;
        height: 33px;
    }
    .app.open span {
        border-color: #4c4c4c;
        background: linear-gradient(135deg, #b9b9b9, #999 50%, #8a8a8a 52%, #a4a4a4);
        box-shadow: inset 0 0 0 1px #c9c9c9;
    }
    .app.stack {
        padding-right: 6px;
        border-right: 1px solid #4c4c4c;
        border-radius: 3px;
        box-shadow: inset -3px 0 #a9a9a9, inset -4px 0 #555;
    }
    .app.active span {
        background: linear-gradient(135deg, #dedede, #d0d0d0 50%, #c3c3c3 52%, #dadada);
    }
    .tray {
        display: flex;
        align-items: center;
        margin-left: auto;
    }
    .flap {
        display: flex;
        align-items: center;
        justify-content: center;
        height: 38px;
        border-radius: 12px 0 0 0;
        border: solid #333;
        border-width: 0 1px 1px 0;
        background: linear-gradient(90deg, #999, #777);
        box-shadow: inset 1px 1px #aaa;
    }
    .nexus {
        width: 62px;
    }
    .signal {
        gap: 14px;
        width: 94px;
        padding-right: 12px;
    }
    .lang {
        width: 34px;
        padding-bottom: 4px;
        text-align: center;
    }
    .power {
        gap: 12px;
        width: 98px;
        padding-right: 4px;
    }
    .battery {
        position: relative;
        width: 41px;
        border: 1px solid #fff;
        outline: 1px solid #111;
        background: linear-gradient(#2fae4c, #067222);
        line-height: 18px;
        text-align: center;
    }
    .battery::before {
        content: "";
        position: absolute;
        top: 4px;
        right: -5px;
        width: 4px;
        height: 10px;
        background: #111;
    }
    .small {
        display: flex;
        align-items: center;
        gap: 8px;
        padding-left: 8px;
    }
    .clock {
        display: flex;
        flex-direction: column;
        width: 84px;
        margin-left: 8px;
        line-height: 17px;
        text-align: center;
    }
    .desktop {
        width: 23px;
        height: 39px;
        border: 1px solid #aaa;
        background: linear-gradient(135deg, #999, #555);
    }
</style>
